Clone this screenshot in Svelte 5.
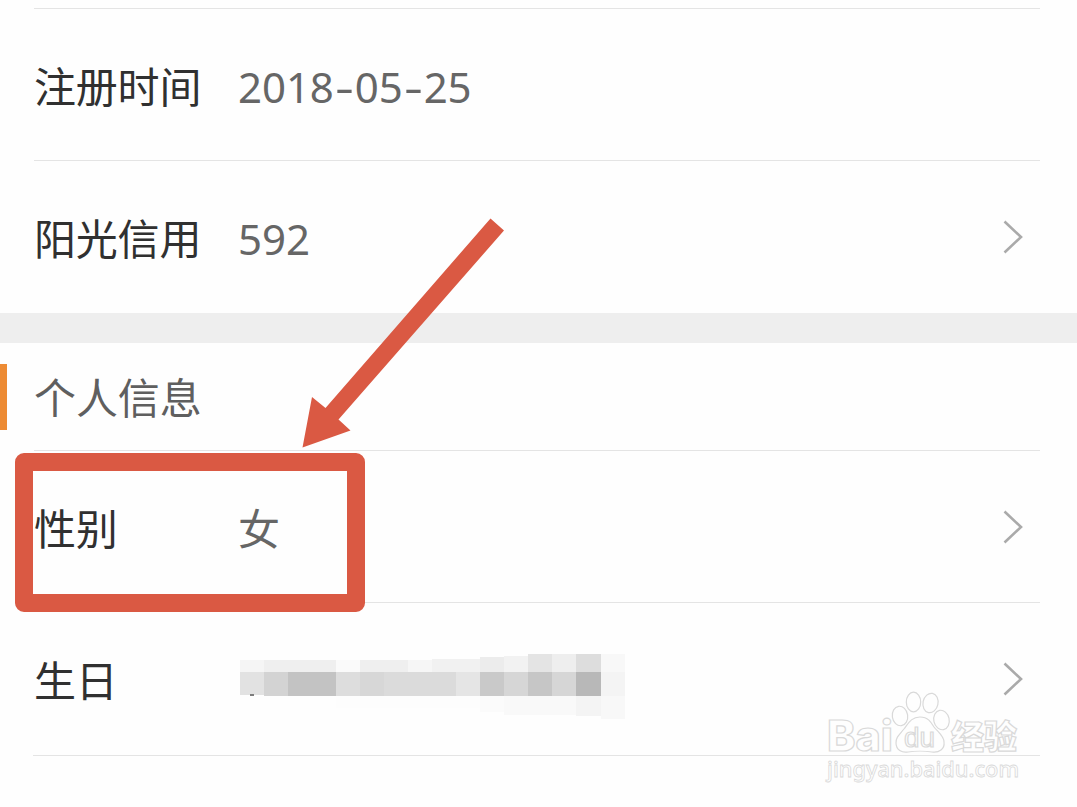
<script>
  const account = [
    { label: '注册时间', value: '2018-05-25', link: false },
    { label: '阳光信用', value: '592', link: true }
  ]

  // censored birthday: x, y, width, height, grey level
  const blocks = [
    [0, 7, 24, 12, 245], [24, 7, 72, 12, 239], [96, 7, 24, 12, 250],
    [120, 7, 48, 12, 239], [168, 7, 24, 12, 246], [192, 6, 48, 13, 241],
    [240, 4, 24, 15, 236], [264, 3, 24, 16, 242], [288, 1, 24, 18, 228],
    [312, 1, 24, 18, 238], [336, 1, 25, 18, 221], [361, 1, 24, 65, 248],
    [0, 19, 24, 23, 226], [24, 19, 24, 24, 211], [48, 19, 48, 24, 195],
    [96, 19, 24, 24, 221], [120, 19, 24, 24, 215], [144, 19, 72, 24, 219],
    [216, 19, 24, 24, 229], [240, 19, 24, 24, 201], [264, 19, 24, 24, 214],
    [288, 19, 24, 24, 198], [312, 19, 24, 24, 214], [336, 19, 25, 24, 184],
    [361, 19, 24, 24, 244], [240, 43, 24, 16, 251], [264, 43, 72, 19, 249],
    [336, 43, 25, 20, 244], [96, 43, 144, 12, 253], [10, 41, 4, 2, 125]
  ]
</script>

{#snippet chevron()}
  <svg class="chevron" viewBox="0 0 24 36">
    <path d="M4.5 2.5 21 18 4.5 33.5" />
  </svg>
{/snippet}

<div class="page">
  <section class="account">
    {#each account as row}
      <div class="row">
        <span class="label">{row.label}</span>
        <span class="value">{#each row.value as ch}{#if ch === '-'}<span class="dash">-</span>{:else}{ch}{/if}{/each}</span>
        {#if row.link}{@render chevron()}{/if}
      </div>
    {/each}
  </section>

  <div class="band"></div>

  <section class="personal">
    <h2>个人信息</h2>
    <div class="row">
      <span class="label">性别</span>
      <span class="value">女</span>
      {@render chevron()}
    </div>
    <div class="row">
      <span class="label">生日</span>
      <svg class="mosaic" viewBox="0 0 390 68" shape-rendering="crispEdges">
        {#each blocks as [x, y, w, h, g]}
          <rect {x} {y} width={w} height={h} fill="rgb({g},{g},{g})" />
        {/each}
      </svg>
      {@render chevron()}
    </div>
    <div class="end"></div>
  </section>

  <div class="highlight"></div>
  <svg class="arrow" viewBox="0 0 210 235">
    <path d="M190.5 8.5 204 20.5 38.5 209.5 50.5 220.5 2.5 237.5 12 187 25.5 198Z" />
  </svg>

  <svg class="watermark" viewBox="0 0 210 100">
    <g class="brand">
      <text class="bai" x="7" y="61" font-size="42" textLength="66" lengthAdjust="spacingAndGlyphs">Bai</text>
      <ellipse cx="80" cy="26" rx="7.7" ry="9.8" transform="rotate(-8 80 26)" />
      <ellipse cx="93.5" cy="12" rx="7.2" ry="9.8" />
      <ellipse cx="110.5" cy="13" rx="7.5" ry="9.8" transform="rotate(12 110.5 13)" />
      <ellipse cx="121.5" cy="30" rx="7.7" ry="9.8" transform="rotate(-12 121.5 30)" />
      <path d="M100 27C91 27 88 34 84 39C79 45 76 47 76 53C76 60 82 63 88 62C94 61 106 61 112 62C119 63 125 59 124 52C124 46 118 42 114 37C111 32 108 27 100 27Z" />
      <text class="du" x="84" y="56.5" font-size="27" textLength="31" lengthAdjust="spacingAndGlyphs">du</text>
      <text class="cjk" x="131" y="58.5" font-size="33" textLength="66" lengthAdjust="spacingAndGlyphs">经验</text>
    </g>
    <text class="url" x="7" y="87" font-size="22" textLength="192" lengthAdjust="spacingAndGlyphs">jingyan.baidu.com</text>
  </svg>
</div>

<style>
  :global(body) {
    margin: 0;
    background: #fefefe;
  }
  .page {
    position: relative;
    box-sizing: border-box;
    height: 807px;
    padding-top: 8px;
    overflow: hidden;
    background: #fefefe;
    font-family: 'Noto Sans CJK SC', sans-serif;
    font-size: 42px;
  }
  .account {
    height: 305px;
  }
  .row {
    display: flex;
    align-items: center;
    box-sizing: border-box;
    height: 152px;
    margin: 0 37px 0 34px;
    padding-right: 16px;
    border-top: 1px solid #e4e4e4;
  }
  .label {
    flex: 0 0 204px;
    line-height: 60px;
    letter-spacing: -0.2px;
    color: #303030;
    margin-top: 1px;
  }
  .value {
    font-family: 'Noto Sans', 'Noto Sans CJK SC', sans-serif;
    line-height: 60px;
    letter-spacing: -0.1px;
    color: #666;
    margin-top: 5px;
  }
  .dash {
    display: inline-block;
    width: 21px;
    text-align: center;
    transform: scaleX(1.4);
  }
  .chevron {
    width: 24px;
    height: 36px;
    margin-left: auto;
    fill: none;
    stroke: #aaa;
    stroke-width: 2.6;
  }
  .band {
    height: 30px;
    background: #eee;
  }
  .personal h2 {
    display: flex;
    align-items: center;
    box-sizing: border-box;
    height: 66px;
    margin: 21px 0 20px;
    padding: 0 0 2px 27px;
    border-left: 7px solid #ed8b34;
    font-size: 42px;
    font-weight: 400;
    line-height: 60px;
    letter-spacing: -0.1px;
    color: #5f5f5f;
  }
  .end {
    margin: 1px 37px 0 33px;
    border-top: 1px solid #e4e4e4;
  }
  .mosaic {
    width: 390px;
    height: 68px;
    margin-top: 17px;
    margin-left: 2px;
  }
  .highlight {
    position: absolute;
    left: 15px;
    top: 453px;
    box-sizing: border-box;
    width: 350px;
    height: 159px;
    border: 18px solid #da5943;
    border-radius: 9px;
  }
  .arrow {
    position: absolute;
    left: 300px;
    top: 210px;
    width: 210px;
    height: 235px;
    overflow: visible;
    fill: #da5943;
  }
  .watermark {
    position: absolute;
    left: 820px;
    top: 690px;
    width: 210px;
    height: 100px;
    fill: #fefefe;
    stroke: #d9d9d9;
    stroke-width: 1.2;
  }
  .watermark text {
    font-family: 'Liberation Sans', Arial, sans-serif;
    font-weight: 700;
  }
  .watermark .bai {
    font-family: Inter, sans-serif;
    font-weight: 800;
  }
  .watermark .du {
    font-weight: 400;
  }
  .watermark .cjk {
    font-family: 'Noto Sans CJK SC', sans-serif;
    font-weight: 900;
  }
  .watermark .url {
    font-family: 'Noto Sans', sans-serif;
    font-weight: 500;
    stroke-width: 0.8;
  }
</style>
